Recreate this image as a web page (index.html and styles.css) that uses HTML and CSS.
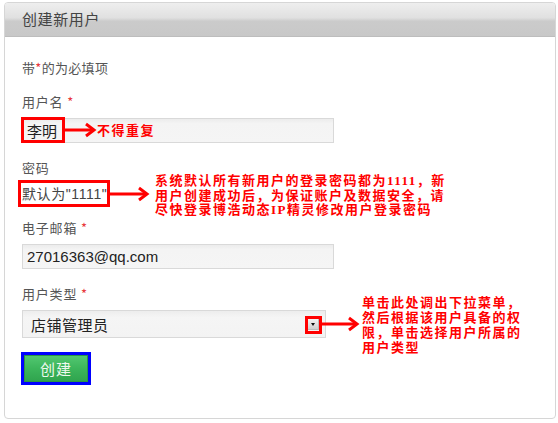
FILE: index.html
```html
<!DOCTYPE html>
<html lang="zh-CN">
<head>
<meta charset="utf-8">
<title>创建新用户</title>
<link rel="stylesheet" href="styles.css">
</head>
<body>
<div class="card">
  <div class="card-header">创建新用户</div>
  <div class="card-body">
    <p class="hint">带<span class="star">*</span>的为必填项</p>

    <div class="field">
      <div class="label">用户名 <span class="star">*</span></div>
      <div class="control">
        <div class="input">李明</div>
        <span class="mark mark-name"></span>
        <svg class="arrow arrow-name" width="32" height="16" viewBox="0 0 32 16"><line x1="0" y1="8" x2="29" y2="8"/><polyline points="21,2 29,8 21,14"/></svg>
        <span class="note note-name">不得重复</span>
      </div>
    </div>

    <div class="field">
      <div class="label">密码</div>
      <div class="control control-text">
        <div class="static">默认为"1111"</div>
        <span class="mark mark-pw"></span>
        <svg class="arrow arrow-pw" width="40" height="16" viewBox="0 0 40 16"><line x1="0" y1="8" x2="37" y2="8"/><polyline points="29,2 37,8 29,14"/></svg>
        <p class="note note-pw">系统默认所有新用户的登录密码都为1111，新<br>用户创建成功后，为保证账户及数据安全，请<br>尽快登录博浩动态IP精灵修改用户登录密码</p>
      </div>
    </div>

    <div class="field">
      <div class="label">电子邮箱 <span class="star">*</span></div>
      <div class="control">
        <div class="input input-latin">27016363@qq.com</div>
      </div>
    </div>

    <div class="field">
      <div class="label">用户类型 <span class="star">*</span></div>
      <div class="control">
        <div class="select">
          <span class="select-value">店铺管理员</span>
          <span class="select-btn"><span class="caret"></span></span>
        </div>
        <span class="mark mark-type"></span>
        <svg class="arrow arrow-type" width="38" height="16" viewBox="0 0 38 16"><line x1="0" y1="8" x2="35" y2="8"/><polyline points="27,2 35,8 27,14"/></svg>
        <p class="note note-type">单击此处调出下拉菜单，<br>然后根据该用户具备的权<br>限，单击选择用户所属的<br>用户类型</p>
      </div>
    </div>

    <div class="actions">
      <button class="btn" type="button">创建</button>
    </div>
  </div>
</div>
</body>
</html>
```

FILE: styles.css
```css
* {
  box-sizing: border-box;
}

html, body {
  margin: 0;
  padding: 0;
  background: #ffffff;
}

body {
  font-family: "Noto Sans CJK SC", "Liberation Sans", sans-serif;
  font-size: 13px;
  color: #555;
}

.card {
  margin: 2px 0 0 4px;
  width: 552px;
  height: 417px;
  border: 1px solid #d6d6d6;
  border-radius: 4px;
  overflow: hidden;
  background: #fff;
}

.card-header {
  height: 34px;
  padding-left: 17px;
  line-height: 32px;
  font-size: 15px;
  color: #444;
  letter-spacing: 0.6px;
  background: linear-gradient(to bottom, #eeeeee 0%, #e0e0e0 45%, #cbcbcb 55%, #c8c8c8 100%);
  border-bottom: 1px solid #bdbdbd;
}

.card-body {
  padding-left: 17px;
}

.hint {
  margin: 22px 0 0;
  line-height: 18px;
  letter-spacing: 0.3px;
}

.star {
  color: #e8383d;
}

.field {
  margin-top: 16px;
}

.label {
  line-height: 18px;
  letter-spacing: 0.8px;
}

.control {
  position: relative;
  margin-top: 7px;
}

.control-text {
  margin-top: 8px;
}

.input {
  width: 312px;
  height: 25px;
  padding-left: 4px;
  line-height: 23px;
  font-size: 15px;
  color: #222;
  background: linear-gradient(to bottom, #ececec 0%, #f4f4f4 20%, #f5f5f5 100%);
  border: 1px solid #d9d9d9;
}

.input-latin {
  font-family: "Liberation Sans", Arial, sans-serif;
}

.static {
  line-height: 18px;
  font-family: "Liberation Sans", "Noto Sans CJK SC", sans-serif;
  font-size: 14px;
  color: #444;
  letter-spacing: 0.6px;
}

.select {
  display: flex;
  align-items: center;
  justify-content: space-between;
  width: 304px;
  height: 28px;
  padding: 0 6px 0 8px;
  background: linear-gradient(to bottom, #ededed 0%, #f5f5f5 25%, #f3f3f3 100%);
  border: 1px solid #d9d9d9;
}

.select-value {
  font-size: 15px;
  color: #222;
  letter-spacing: 0.5px;
}

.select-btn {
  display: flex;
  align-items: center;
  justify-content: center;
  width: 12px;
  height: 12px;
  background: linear-gradient(to bottom, #f4f4f4, #d0d0d0);
  border: 1px solid #bdbdbd;
}

.caret {
  width: 0;
  height: 0;
  border-left: 2.5px solid transparent;
  border-right: 2.5px solid transparent;
  border-top: 3px solid #111;
}

/* annotation overlays */
.mark {
  position: absolute;
  border: 3px solid #f00;
}

.mark-name {
  left: -1px;
  top: -1px;
  width: 44px;
  height: 26px;
}

.mark-pw {
  left: -4px;
  top: -5px;
  width: 92px;
  height: 27px;
}

.mark-type {
  left: 283px;
  top: 6px;
  width: 17px;
  height: 18px;
}

.arrow {
  position: absolute;
  fill: none;
  stroke: #f00;
  stroke-width: 3;
}

.arrow-name {
  left: 43px;
  top: 4px;
}

.arrow-pw {
  left: 88px;
  top: 1px;
}

.arrow-type {
  left: 300px;
  top: 6px;
}

.note {
  position: absolute;
  margin: 0;
  color: #f00;
  font-family: "Liberation Serif", "Noto Sans CJK SC", serif;
  font-weight: bold;
  font-size: 13px;
  line-height: 15px;
  letter-spacing: 1.5px;
  white-space: nowrap;
}

.note-name {
  left: 75px;
  top: 4px;
  line-height: 18px;
}

.note-pw {
  left: 133px;
  top: -11px;
  line-height: 14.5px;
}

.note-type {
  left: 340px;
  top: -15px;
  line-height: 15px;
}

.actions {
  margin-top: 17px;
  padding-left: 2px;
}

.btn {
  display: block;
  width: 64px;
  height: 27px;
  margin: 0;
  padding: 0;
  font-family: "Noto Sans CJK SC", sans-serif;
  font-size: 15px;
  letter-spacing: 1px;
  color: #eef8ee;
  background: linear-gradient(to bottom, #52c771 0%, #3cb55b 50%, #30a44e 100%);
  border: 1px solid #2a9446;
  outline: 3px solid #0000ff;
  outline-offset: 0;
}
```
